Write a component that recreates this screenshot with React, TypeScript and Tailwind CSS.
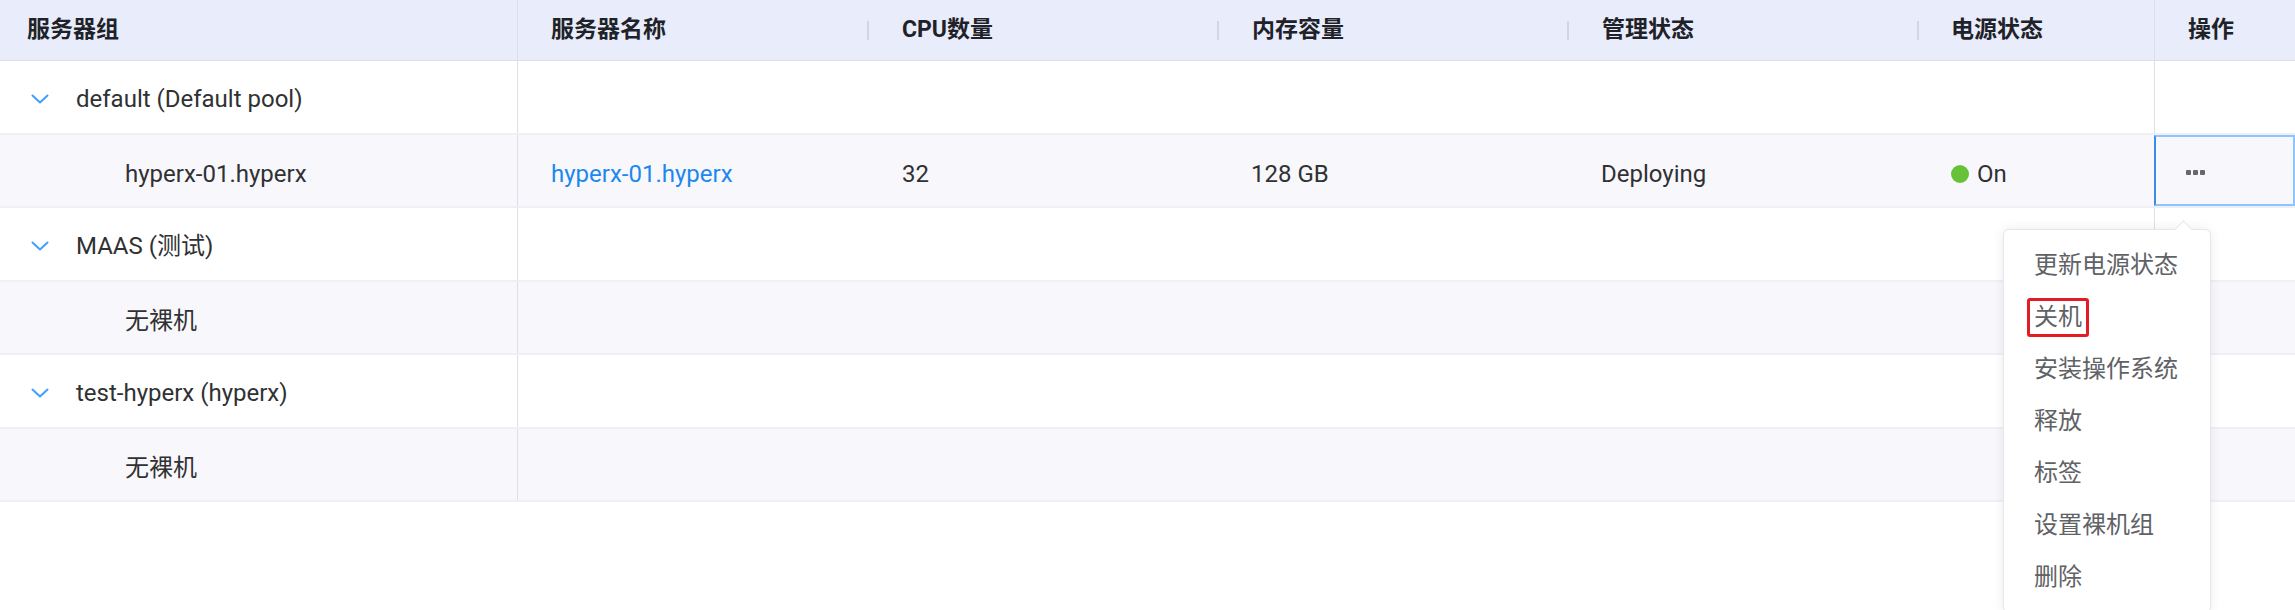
import React from 'react'

const FONT = "font-['Roboto','Noto_Sans_CJK_SC',sans-serif]"

// middle header columns, each closed by a short separator
const HEAD = [
  { label: 'CPU数量', w: 'w-[350px]' },
  { label: '内存容量', w: 'w-[350px]' },
  { label: '管理状态', w: 'w-[350px]' },
]

const MENU = ['更新电源状态', '关机', '安装操作系统', '释放', '标签', '设置裸机组', '删除']

export default function App() {
  return (
    <div className={`relative w-[2295px] h-[610px] overflow-hidden bg-white ${FONT} text-[24px] text-[#303133]`}>
      {/* Header */}
      <div className="flex h-[61px] bg-[#e9edfb] border-b border-[#dcdfe6] text-[23px] font-bold text-[#1f2329]">
        <div className="w-[518px] shrink-0 flex items-center pl-[27px] border-r border-[#dcdfe6]">服务器组</div>
        <HeadCell label="服务器名称" w="w-[351px]" />
        {HEAD.map((h) => (
          <HeadCell key={h.label} label={h.label} w={h.w} />
        ))}
        <div className="w-[235px] shrink-0 flex items-center pl-[32px]">电源状态</div>
        <div className="w-[141px] shrink-0 flex items-center pl-[33px] border-l border-[#dcdfe6]">操作</div>
      </div>

      {/* Group: default */}
      <GroupRow name="default (Default pool)" />
      <div className="flex h-[73px] bg-[#f8f8fc] border-b-2 border-[#eff0f5]">
        <div className="w-[518px] shrink-0 flex items-center pt-[7px] pl-[125px] border-r border-[#dcdfe6]">hyperx-01.hyperx</div>
        <div className="w-[351px] shrink-0 flex items-center pt-[7px] pl-[33px] text-[#1c88ee]">hyperx-01.hyperx</div>
        <div className="w-[350px] shrink-0 flex items-center pt-[7px] pl-[33px]">32</div>
        <div className="w-[350px] shrink-0 flex items-center pt-[7px] pl-[32px]">128 GB</div>
        <div className="w-[350px] shrink-0 flex items-center pt-[7px] pl-[32px]">Deploying</div>
        <div className="w-[235px] shrink-0 flex items-center gap-[8px] pt-[7px] pl-[32px]">
          <span className="w-[18px] h-[18px] rounded-full bg-[#67c23a]" />
          On
        </div>
        <div className="w-[141px] shrink-0 flex items-center pt-[4px] pl-[30px] border-2 border-[#8cc5ff] border-l-[#3a8ee6]">
          <span className="flex gap-[2px]">
            <span className="w-[5px] h-[5px] rounded-[1px] bg-[#66686d]" />
            <span className="w-[5px] h-[5px] rounded-[1px] bg-[#66686d]" />
            <span className="w-[5px] h-[5px] rounded-[1px] bg-[#66686d]" />
          </span>
        </div>
      </div>

      {/* Group: MAAS */}
      <GroupRow name="MAAS (测试)" />
      <EmptyChild />

      {/* Group: test-hyperx */}
      <GroupRow name="test-hyperx (hyperx)" />
      <EmptyChild />

      {/* Action dropdown */}
      <div className="absolute left-[2003px] top-[229px] w-[208px] bg-white border border-[#e4e7ed] rounded-[6px] shadow-[0_0_12px_rgba(0,0,0,0.08)] py-[9px] text-[#606266]">
        <div className="absolute -top-[7px] left-[173px] w-[13px] h-[13px] rotate-45 bg-white border-l border-t border-[#e4e7ed]" />
        {MENU.map((m) => (
          <div key={m} className="h-[52px] flex items-center pl-[30px]">
            {m === '关机' ? (
              <span className="relative inline-block leading-[33px]">
                {m}
                <span className="absolute -left-[7px] -right-[7px] -top-[3px] -bottom-[3px] border-[3px] border-[#e31b23] rounded-[3px]" />
              </span>
            ) : (
              m
            )}
          </div>
        ))}
      </div>
    </div>
  )
}

function HeadCell({ label, w }: { label: string; w: string }) {
  return (
    <div className={`${w} shrink-0 flex items-center pl-[33px]`}>
      <span className="flex-1">{label}</span>
      <span className="w-[2px] h-[19px] bg-[#d3d6dd]" />
    </div>
  )
}

function GroupRow({ name }: { name: string }) {
  return (
    <div className="flex h-[74px] bg-white border-b-2 border-[#eff0f5]">
      <div className="w-[518px] shrink-0 flex items-center pt-[4px] pl-[31px] border-r border-[#dcdfe6]">
        <ChevronDown />
        <span className="ml-[27px]">{name}</span>
      </div>
      <div className="w-[1636px] shrink-0" />
      <div className="w-[141px] shrink-0 border-l border-[#dcdfe6]" />
    </div>
  )
}

function EmptyChild() {
  return (
    <div className="flex h-[73px] bg-[#f8f8fc] border-b-2 border-[#eff0f5]">
      <div className="w-[518px] shrink-0 flex items-center pt-[7px] pl-[125px] border-r border-[#dcdfe6]">无裸机</div>
      <div className="w-[1636px] shrink-0" />
      <div className="w-[141px] shrink-0 border-l border-[#dcdfe6]" />
    </div>
  )
}

function ChevronDown() {
  return (
    <svg width="18" height="10" viewBox="0 0 18 10" fill="none">
      <path d="M1.5 1.5L9 8.5L16.5 1.5" stroke="#409eff" strokeWidth="2" strokeLinecap="round" strokeLinejoin="round" />
    </svg>
  )
}
